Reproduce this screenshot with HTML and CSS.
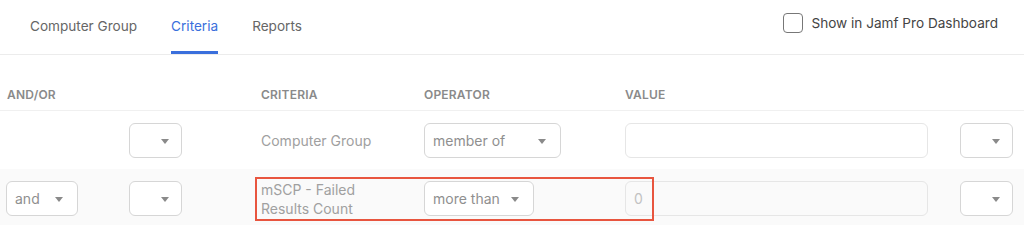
FILE: index.html
```html
<!DOCTYPE html>
<html>
<head>
<meta charset="utf-8">
<link rel="stylesheet" href="styles.css">
</head>
<body>
<div class="topbar">
  <nav class="tabs">
    <span class="tab">Computer Group</span>
    <span class="tab active">Criteria</span>
    <span class="tab">Reports</span>
  </nav>
  <label class="dash"><span class="box"></span>Show in Jamf Pro Dashboard</label>
</div>
<div class="table">
  <div class="row head">
    <div>AND/OR</div>
    <div></div>
    <div>CRITERIA</div>
    <div>OPERATOR</div>
    <div>VALUE</div>
    <div></div>
  </div>
  <div class="row">
    <div></div>
    <div><span class="sel sm"><span class="caret"></span></span></div>
    <div class="crit">Computer Group</div>
    <div><span class="sel op1">member of<span class="caret"></span></span></div>
    <div><span class="input"></span></div>
    <div><span class="sel sm"><span class="caret"></span></span></div>
  </div>
  <div class="row alt">
    <div><span class="sel andsel">and<span class="caret"></span></span></div>
    <div><span class="sel sm"><span class="caret"></span></span></div>
    <div class="crit two">mSCP - Failed<br>Results Count</div>
    <div><span class="sel op2">more than<span class="caret"></span></span></div>
    <div><span class="input">0</span></div>
    <div><span class="sel sm"><span class="caret"></span></span></div>
    <span class="highlight"></span>
  </div>
</div>
</body>
</html>
```
FILE: styles.css
```css
* { box-sizing: border-box; }
html, body { margin: 0; padding: 0; background: #fff; }
body { font-family: Inter, "Noto Sans", sans-serif; color: #666; overflow: hidden; }

.topbar {
  height: 55px;
  border-bottom: 1px solid #ececec;
  display: flex;
  justify-content: space-between;
  align-items: flex-start;
}
.tabs { display: flex; gap: 34px; padding-left: 30px; height: 54px; }
.tab {
  font-size: 13.6px;
  color: #666;
  padding-top: 18px;
  height: 54px;
  border-bottom: 3px solid transparent;
}
.tab.active { color: #3a6fdc; border-bottom-color: #3a6fdc; }

.dash {
  display: flex; align-items: center; gap: 8px;
  font-size: 13.6px; color: #444;
  padding-top: 13px; padding-right: 26px;
}
.box {
  width: 20px; height: 20px;
  border: 1.5px solid #777; border-radius: 4px; background: #fff;
}

.table { position: relative; }
.row {
  position: relative;
  display: grid;
  grid-template-columns: 123px 132px 163px 201px 335px 1fr;
  padding-left: 6px;
  align-items: center;
}
.head {
  height: 56px;
  border-bottom: 1px solid #f0f0f0;
  align-items: end;
  padding-bottom: 8px;
  font-size: 12px; font-weight: 600; color: #8a8a8a; letter-spacing: 0.2px;
}
.head > div:first-child { padding-left: 1px; }
.row:not(.head) { height: 58px; font-size: 14px; color: #a0a0a0; }
.alt { background: #fafafa; }

.sel {
  position: relative;
  display: flex; align-items: center;
  height: 35px;
  border: 1px solid #d6d6d6; border-radius: 6px; background: #fff;
  padding-left: 8px; font-size: 14px; color: #8f8f8f;
}
.sel.sm { width: 53px; }
.op1 { width: 137px; }
.op2 { width: 110px; }
.andsel { width: 72px; }
.caret {
  position: absolute; right: 14px; top: 15px;
  width: 0; height: 0;
  border-left: 4px solid transparent; border-right: 4px solid transparent;
  border-top: 5px solid #8a8a8a;
}
.sel.sm .caret { right: 12px; }

.input {
  display: flex; align-items: center;
  width: 303px; height: 35px;
  border: 1px solid #e6e6e6; border-radius: 6px; background: #fff;
  padding-left: 8px; font-size: 14px; color: #c2c2c2;
}
.alt .input { background: #fafafa; }

.crit { line-height: 19px; }
.crit.two { padding-top: 2px; }

.highlight {
  position: absolute;
  left: 255px; top: 8px;
  width: 399px; height: 44px;
  border: 2px solid #e8553f;
  pointer-events: none;
}
```
